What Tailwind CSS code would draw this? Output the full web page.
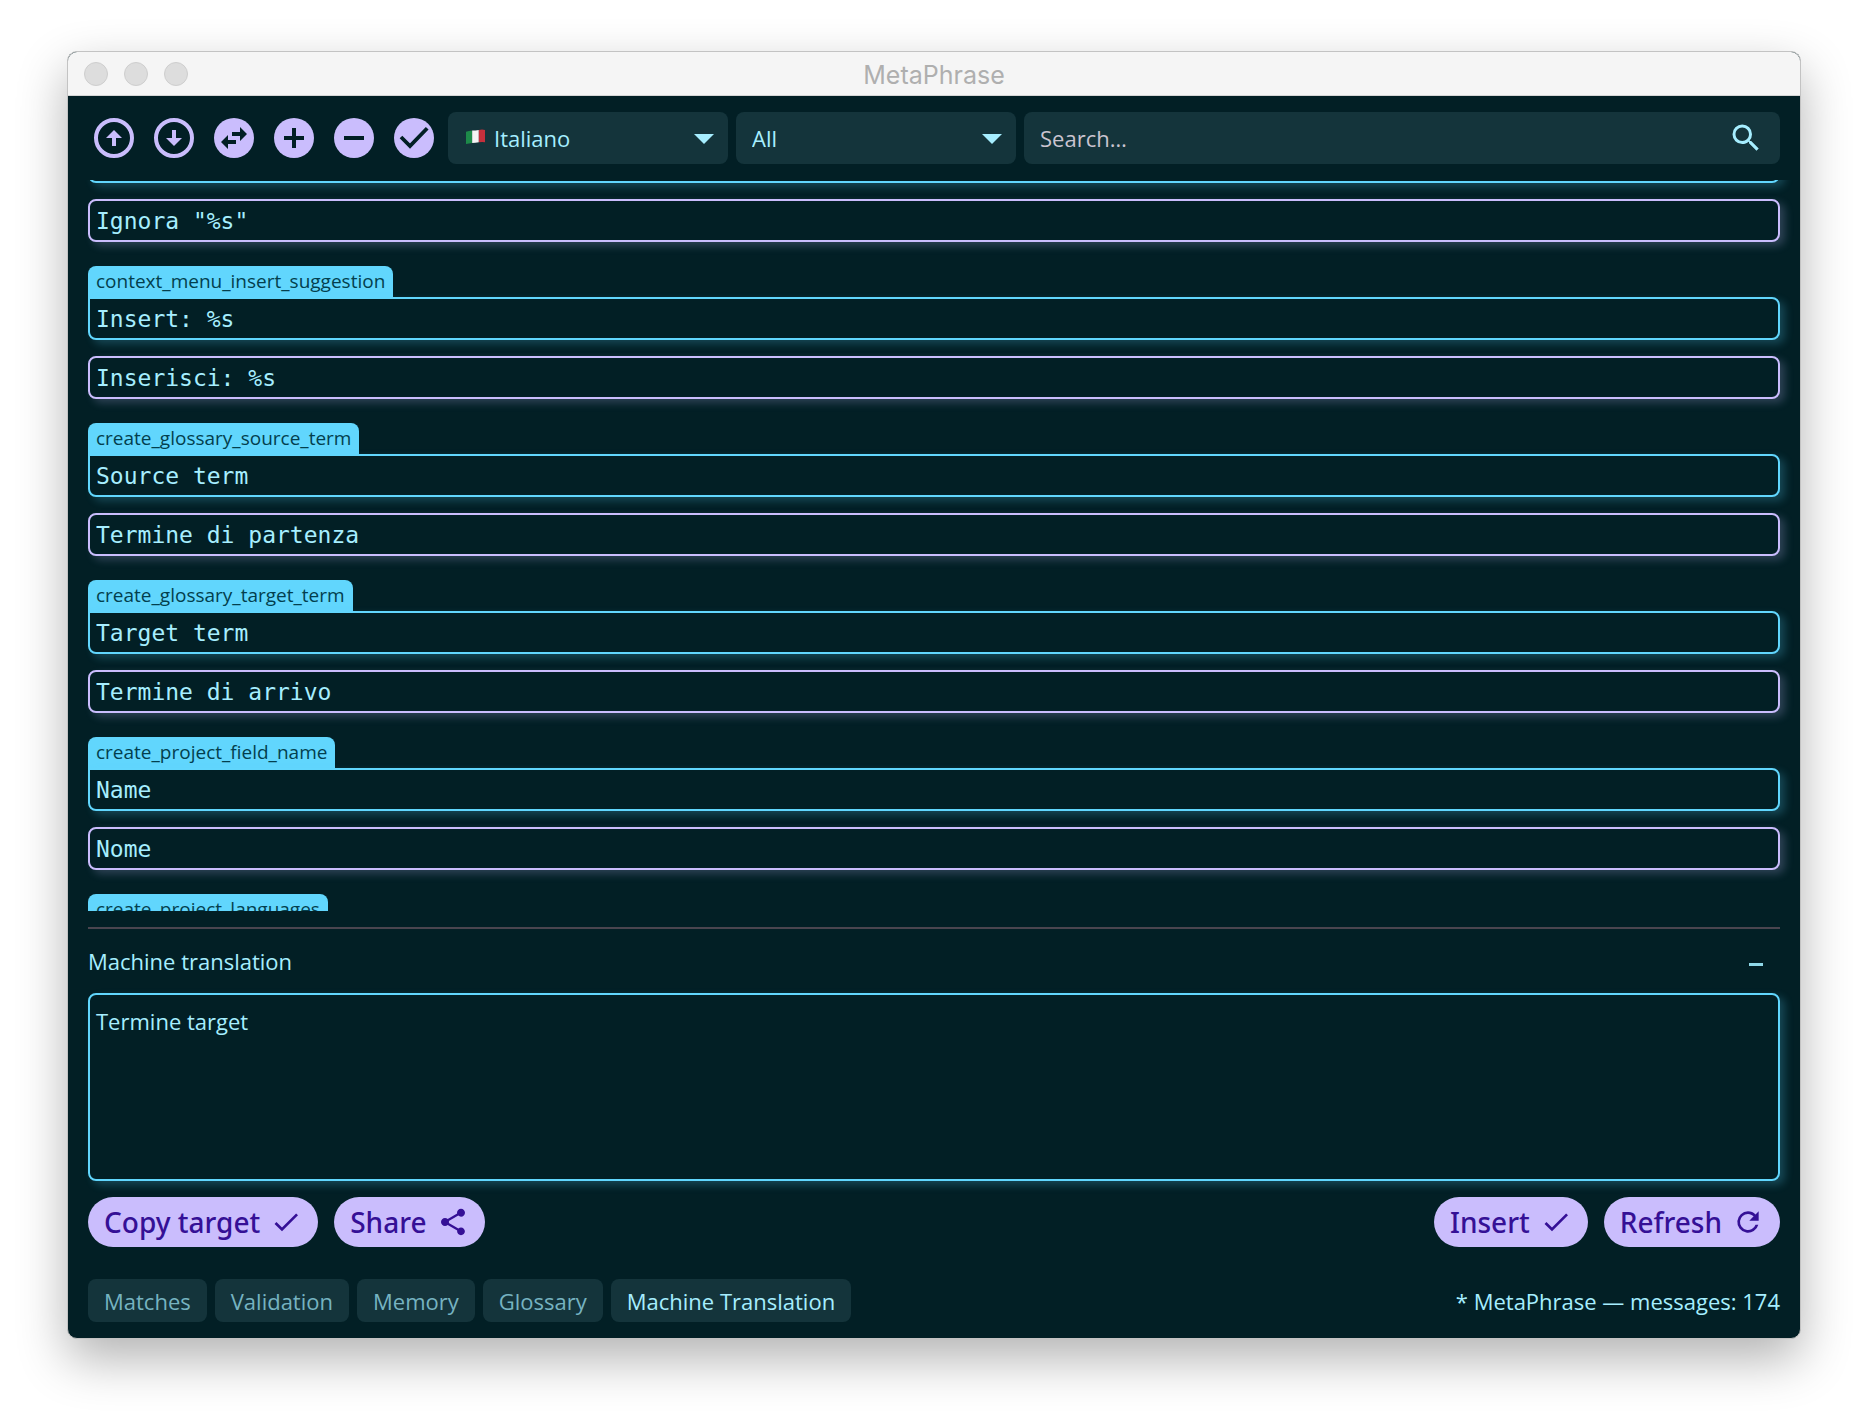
<!DOCTYPE html>
<html lang="it">
<head>
<meta charset="utf-8">
<title>MetaPhrase</title>
<script src="https://cdn.jsdelivr.net/npm/@tailwindcss/browser@4"></script>
</head>
<body class="h-screen flex flex-col bg-white px-[67px] pt-[51px] pb-[83px] font-['Open_Sans',sans-serif] text-[22px] leading-[28px] text-[#a6eeff]">
<main class="flex-1 min-h-0 flex flex-col rounded-[10px] overflow-hidden border border-[#c3c3c3] bg-[#021f25] shadow-[0_20px_50px_rgba(0,0,0,0.3)]">
  <header class="h-11 shrink-0 grid grid-cols-3 items-center px-4 bg-[#f5f5f5] border-b border-[#d6d6d6]">
    <div class="flex gap-4">
      <span class="size-6 rounded-full bg-[#dddddd] border border-[#cecece]"></span>
      <span class="size-6 rounded-full bg-[#dddddd] border border-[#cecece]"></span>
      <span class="size-6 rounded-full bg-[#dddddd] border border-[#cecece]"></span>
    </div>
    <h1 class="pt-0.5 text-center font-['Inter',sans-serif] text-[25px] leading-8 text-[#afafaf]">MetaPhrase</h1>
  </header>

  <div class="shrink-0 flex gap-2 px-5 py-4 text-[#cabdfd]">
    <button aria-label="Open" class="size-[52px] shrink-0 grid place-items-center"><svg class="size-12" viewBox="0 0 24 24"><circle cx="12" cy="12" r="9" fill="none" stroke="currentColor" stroke-width="2"/><path fill="currentColor" d="M11 16h2v-4h3l-4-4-4 4h3z"/></svg></button>
    <button aria-label="Save" class="size-[52px] shrink-0 grid place-items-center"><svg class="size-12" viewBox="0 0 24 24"><circle cx="12" cy="12" r="9" fill="none" stroke="currentColor" stroke-width="2"/><path fill="currentColor" d="M11 8h2v4h3l-4 4-4-4h3z"/></svg></button>
    <button aria-label="Swap" class="size-[52px] shrink-0 grid place-items-center"><svg class="size-12" viewBox="0 0 24 24"><circle cx="12" cy="12" r="10" fill="currentColor"/><path fill="#021f25" d="M15 6.500l3.500 3.500-3.500 3.500V11h-4V9h4zM9 17.500L5.500 14 9 10.500V13h4v2H9z"/></svg></button>
    <button aria-label="Add" class="size-[52px] shrink-0 grid place-items-center"><svg class="size-12" viewBox="0 0 24 24"><circle cx="12" cy="12" r="10" fill="currentColor"/><path fill="#021f25" d="M17 13h-4v4h-2v-4H7v-2h4V7h2v4h4z"/></svg></button>
    <button aria-label="Remove" class="size-[52px] shrink-0 grid place-items-center"><svg class="size-12" viewBox="0 0 24 24"><circle cx="12" cy="12" r="10" fill="currentColor"/><path fill="#021f25" d="M17 13H7v-2h10z"/></svg></button>
    <button aria-label="Validate" class="size-[52px] shrink-0 grid place-items-center"><svg class="size-12" viewBox="0 0 24 24"><circle cx="12" cy="12" r="10" fill="currentColor"/><path fill="none" stroke="#021f25" stroke-width="1.900" d="M5.500 11.500l4.500 4.500 8.600-8.900"/></svg></button>

    <div class="relative w-[280px] shrink-0">
      <select aria-label="Language" class="appearance-none size-full rounded-lg bg-[#14343b] pl-[46px] pr-12 text-[#a6eeff]"><option>Italiano</option></select>
      <svg class="absolute left-[18px] top-[17px] w-[19px] h-4 pointer-events-none" viewBox="0 0 20 18" preserveAspectRatio="none"><path fill="#1d8a49" d="M0 3q3-1 6.500-1.300v14Q3 16 0 17z"/><path fill="#f4f4f4" d="M6.500 1.700Q10 1.600 13.500 1v14q-3.500.7-7 .7z"/><path fill="#c4303c" d="M13.500 1Q17 0 20 1v14q-3-.8-6.500 0z"/></svg>
      <svg class="absolute right-[14px] top-[22px] w-5 h-[10px] pointer-events-none" viewBox="0 0 20 10"><path fill="#a6eeff" d="M0 0h20L10 10z"/></svg>
    </div>
    <div class="relative w-[280px] shrink-0">
      <select aria-label="Filter" class="appearance-none size-full rounded-lg bg-[#14343b] pl-4 pr-12 text-[#a6eeff]"><option>All</option></select>
      <svg class="absolute right-[14px] top-[22px] w-5 h-[10px] pointer-events-none" viewBox="0 0 20 10"><path fill="#a6eeff" d="M0 0h20L10 10z"/></svg>
    </div>
    <div class="flex-1 min-w-0 flex items-center rounded-lg bg-[#14343b] pl-4 pr-4">
      <input type="text" aria-label="Search" placeholder="Search…" class="flex-1 min-w-0 h-full bg-transparent outline-none text-[#a6eeff] placeholder:text-[#cac4d0]">
      <button aria-label="Run search" class="text-[#a6eeff]"><svg class="size-9" viewBox="0 0 24 24"><path fill="currentColor" d="M15.500 14h-.79l-.28-.27A6.471 6.471 0 0016 9.500 6.500 6.500 0 109.500 16c1.610 0 3.090-.59 4.230-1.570l.27.28v.79l5 4.990L20.490 19l-4.990-5zm-6 0C7.010 14 5 11.990 5 9.500S7.010 5 9.500 5 14 7.010 14 9.500 11.990 14 9.500 14z"/></svg></button>
    </div>
  </div>

  <section aria-label="Messages" class="flex-1 min-h-0 overflow-hidden px-5 flex flex-col gap-6 font-['DejaVu_Sans_Mono',monospace] text-[23px]">
    <article class="-mt-10 shrink-0 flex flex-col items-start">
      <input aria-label="Source message" class="w-full h-[43px] px-[6px] border-2 border-[#61d6fd] rounded-lg rounded-tl-none bg-[#021f25] outline-none shadow-[5px_4px_8px_rgba(97,214,253,0.22)]">
      <input aria-label="Translation" value='Ignora "%s"' class="mt-4 w-full h-[43px] px-[6px] border-2 border-[#cabdfd] rounded-lg bg-[#021f25] outline-none shadow-[5px_4px_8px_rgba(202,189,253,0.22)]">
    </article>
    <article class="shrink-0 flex flex-col items-start">
      <label for="s1" class="h-[31px] px-2 rounded-t-lg bg-[#61d6fd] text-[#033f4e] font-['Open_Sans',sans-serif] text-[19px] leading-[31px]">context_menu_insert_suggestion</label>
      <input id="s1" value="Insert: %s" class="w-full h-[43px] px-[6px] border-2 border-[#61d6fd] rounded-lg rounded-tl-none bg-[#021f25] outline-none shadow-[5px_4px_8px_rgba(97,214,253,0.22)]">
      <input aria-label="Translation" value="Inserisci: %s" class="mt-4 w-full h-[43px] px-[6px] border-2 border-[#cabdfd] rounded-lg bg-[#021f25] outline-none shadow-[5px_4px_8px_rgba(202,189,253,0.22)]">
    </article>
    <article class="shrink-0 flex flex-col items-start">
      <label for="s2" class="h-[31px] px-2 rounded-t-lg bg-[#61d6fd] text-[#033f4e] font-['Open_Sans',sans-serif] text-[19px] leading-[31px]">create_glossary_source_term</label>
      <input id="s2" value="Source term" class="w-full h-[43px] px-[6px] border-2 border-[#61d6fd] rounded-lg rounded-tl-none bg-[#021f25] outline-none shadow-[5px_4px_8px_rgba(97,214,253,0.22)]">
      <input aria-label="Translation" value="Termine di partenza" class="mt-4 w-full h-[43px] px-[6px] border-2 border-[#cabdfd] rounded-lg bg-[#021f25] outline-none shadow-[5px_4px_8px_rgba(202,189,253,0.22)]">
    </article>
    <article class="shrink-0 flex flex-col items-start">
      <label for="s3" class="h-[31px] px-2 rounded-t-lg bg-[#61d6fd] text-[#033f4e] font-['Open_Sans',sans-serif] text-[19px] leading-[31px]">create_glossary_target_term</label>
      <input id="s3" value="Target term" class="w-full h-[43px] px-[6px] border-2 border-[#61d6fd] rounded-lg rounded-tl-none bg-[#021f25] outline-none shadow-[5px_4px_8px_rgba(97,214,253,0.22)]">
      <input aria-label="Translation" value="Termine di arrivo" class="mt-4 w-full h-[43px] px-[6px] border-2 border-[#cabdfd] rounded-lg bg-[#021f25] outline-none shadow-[5px_4px_8px_rgba(202,189,253,0.22)]">
    </article>
    <article class="shrink-0 flex flex-col items-start">
      <label for="s4" class="h-[31px] px-2 rounded-t-lg bg-[#61d6fd] text-[#033f4e] font-['Open_Sans',sans-serif] text-[19px] leading-[31px]">create_project_field_name</label>
      <input id="s4" value="Name" class="w-full h-[43px] px-[6px] border-2 border-[#61d6fd] rounded-lg rounded-tl-none bg-[#021f25] outline-none shadow-[5px_4px_8px_rgba(97,214,253,0.22)]">
      <input aria-label="Translation" value="Nome" class="mt-4 w-full h-[43px] px-[6px] border-2 border-[#cabdfd] rounded-lg bg-[#021f25] outline-none shadow-[5px_4px_8px_rgba(202,189,253,0.22)]">
    </article>
    <article class="shrink-0 flex flex-col items-start">
      <label for="s5" class="h-[31px] px-2 rounded-t-lg bg-[#61d6fd] text-[#033f4e] font-['Open_Sans',sans-serif] text-[19px] leading-[31px]">create_project_languages</label>
      <input id="s5" class="w-full h-[43px] px-[6px] border-2 border-[#61d6fd] rounded-lg rounded-tl-none bg-[#021f25] outline-none">
    </article>
  </section>

  <section class="shrink-0 px-5 pt-4 flex flex-col">
    <hr class="border-0 h-[2px] bg-[#4a454f]">
    <div class="h-16 flex items-center justify-between pr-[14px]">
      <label for="mt">Machine translation</label>
      <button aria-label="Collapse panel" class="size-5 grid place-items-center pt-1.5"><span class="w-[14px] h-[3px] bg-[#8fd8e8]"></span></button>
    </div>
    <textarea id="mt" class="h-[188px] px-[6px] py-3 border-2 border-[#61d6fd] rounded-lg resize-none outline-none shadow-[5px_4px_8px_rgba(97,214,253,0.22)]">Termine target</textarea>
    <div class="mt-4 flex gap-4 font-['Noto_Sans',sans-serif] text-[28px] font-medium text-[#351096]">
      <button class="h-[50px] px-4 rounded-full bg-[#cabdfd] flex items-center gap-2.5">Copy target<svg class="size-8" viewBox="0 0 24 24"><path fill="currentColor" d="M9 16.170L4.830 12l-1.420 1.410L9 19 21 7l-1.410-1.410z"/></svg></button>
      <button class="h-[50px] px-4 rounded-full bg-[#cabdfd] flex items-center gap-2.5">Share<svg class="size-8" viewBox="0 0 24 24"><path fill="currentColor" d="M18 16.080c-.76 0-1.440.3-1.960.77L8.910 12.700c.05-.23.09-.46.09-.7s-.04-.47-.09-.7l7.050-4.110c.54.5 1.250.81 2.040.81 1.660 0 3-1.340 3-3s-1.340-3-3-3-3 1.340-3 3c0 .24.040.47.090.7L8.040 9.810C7.500 9.310 6.790 9 6 9c-1.660 0-3 1.340-3 3s1.340 3 3 3c.79 0 1.500-.31 2.040-.81l7.120 4.160c-.05.21-.08.43-.08.65 0 1.610 1.310 2.920 2.920 2.920s2.920-1.310 2.920-2.920-1.310-2.920-2.920-2.920z"/></svg></button>
      <button class="ml-auto h-[50px] px-4 rounded-full bg-[#cabdfd] flex items-center gap-2.5">Insert<svg class="size-8" viewBox="0 0 24 24"><path fill="currentColor" d="M9 16.170L4.830 12l-1.420 1.410L9 19 21 7l-1.410-1.410z"/></svg></button>
      <button class="h-[50px] px-4 rounded-full bg-[#cabdfd] flex items-center gap-2.5">Refresh<svg class="size-8" viewBox="0 0 24 24"><path fill="currentColor" d="M17.650 6.350A7.958 7.958 0 0012 4a8 8 0 107.730 10h-2.080A6 6 0 1112 6c1.660 0 3.140.69 4.220 1.780L13 11h7V4z"/></svg></button>
    </div>
  </section>

  <footer class="shrink-0 flex items-center justify-between px-5 pt-8 pb-4">
    <nav class="flex gap-2 text-[#76b3c1]">
      <button class="h-[43px] px-4 rounded-lg bg-[#14343b]">Matches</button>
      <button class="h-[43px] px-4 rounded-lg bg-[#14343b]">Validation</button>
      <button class="h-[43px] px-4 rounded-lg bg-[#14343b]">Memory</button>
      <button class="h-[43px] px-4 rounded-lg bg-[#14343b]">Glossary</button>
      <button class="h-[43px] px-4 rounded-lg bg-[#14343b] text-[#a6eeff]">Machine Translation</button>
    </nav>
    <p>* MetaPhrase — messages: 174</p>
  </footer>
</main>
</body>
</html>
